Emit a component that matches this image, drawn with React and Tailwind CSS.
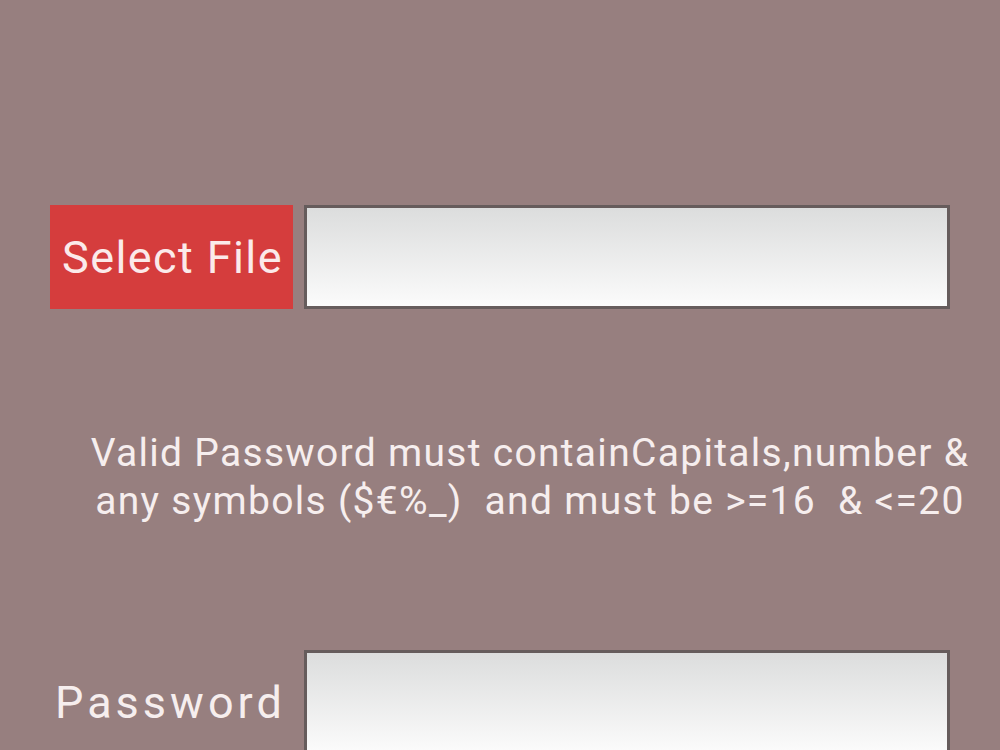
export default function App() {
  return (
    <div className="w-[1000px] h-[750px] overflow-hidden bg-[#977f7f] font-['Roboto','Liberation_Sans',sans-serif]">
      <div className="pt-[205px] pl-[50px]">
        {/* Select file row */}
        <div className="flex items-stretch h-[104px]">
          <button className="w-[243px] pl-[2px] bg-[#d53d3d] text-[#fbeaea] text-[45px] tracking-[1.4px] leading-none flex items-center justify-center">
            Select File
          </button>
          <div className="ml-[11px] w-[646px] border-[3px] border-[#665c5c] bg-gradient-to-b from-[#dcdddd] to-[#fbfbfb]" />
        </div>

        {/* hint text */}
        <p className="mt-[120px] pl-[10px] w-[950px] text-center text-[#f6eeee] text-[39px] tracking-[1.3px] leading-[48px]">
          Valid Password must containCapitals,number &amp;
          <br />
          any symbols ($€%_)&nbsp; and must be &gt;=16&nbsp; &amp; &lt;=20
        </p>

        {/* Password row */}
        <div className="mt-[125px] flex items-center h-[104px]">
          <span className="w-[243px] pl-[5px] text-[#f6eeee] text-[45px] tracking-[4px] leading-none">Password</span>
          <div className="ml-[11px] w-[646px] h-full border-[3px] border-[#665c5c] bg-gradient-to-b from-[#dcdddd] to-[#fbfbfb]" />
        </div>
      </div>
    </div>
  );
}
